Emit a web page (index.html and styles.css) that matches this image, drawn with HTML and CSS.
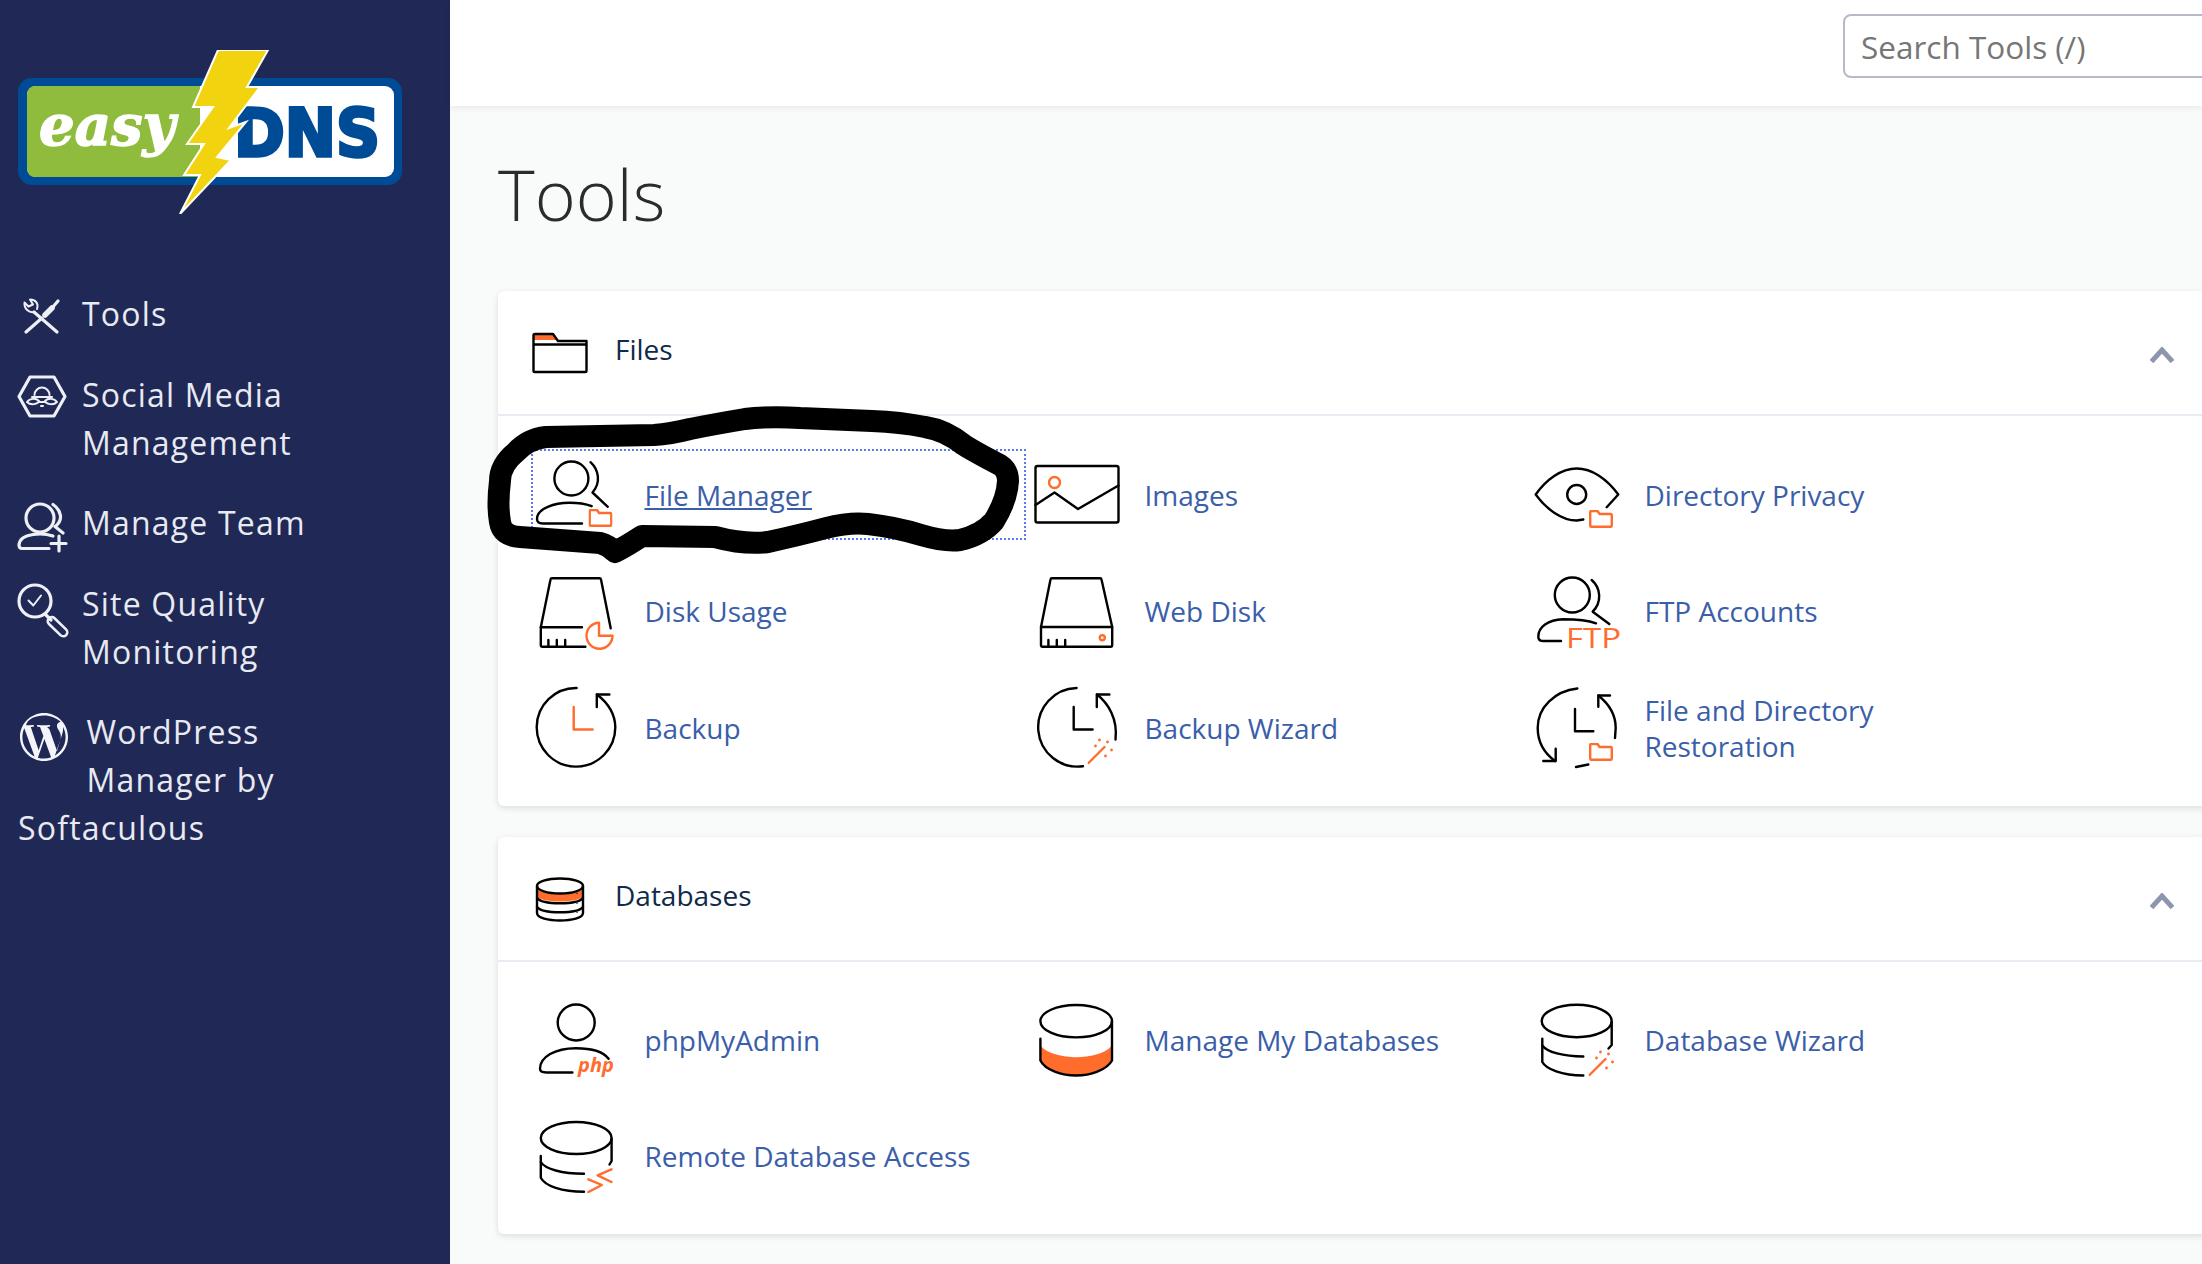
FILE: index.html
```html
<!DOCTYPE html>
<html lang="en">
<head>
<meta charset="utf-8">
<title>Tools</title>
<link rel="stylesheet" href="styles.css">
</head>
<body>
<svg class="defs" width="0" height="0">
  <symbol id="mini-folder" viewBox="0 0 24 18"><path d="M1.2 15.5V2.2Q1.2 1 2.4 1H8.5L10.6 4H21.6Q22.8 4 22.8 5.2V15.5Q22.8 16.8 21.6 16.8H2.4Q1.2 16.8 1.2 15.5Z"/></symbol>
  <symbol id="wand" viewBox="0 0 28 28"><path d="M1 26 L17 10"/><circle class="dot" cx="12" cy="3" r="1.4"/><circle class="dot" cx="20" cy="5" r="1.4"/><circle class="dot" cx="24" cy="13" r="1.4"/><circle class="dot" cx="18" cy="19" r="1.4"/><circle class="dot" cx="8" cy="9" r="1.4"/></symbol>
</svg>
<aside class="sidebar">
  <svg class="logo" viewBox="18 50 384 164" width="384" height="164" role="img" aria-label="easyDNS">
    <rect x="18" y="78" width="384" height="107" rx="14" fill="#004b96"/>
    <rect x="27" y="86" width="367" height="91" rx="9" fill="#fff"/>
    <path d="M36 86H200V177H36Q27 177 27 168V95Q27 86 36 86Z" fill="#8fbc3d"/>
    <text class="logo-easy" x="39" y="145" textLength="136" lengthAdjust="spacingAndGlyphs">easy</text>
    <text class="logo-dns" x="234" y="156" textLength="146" lengthAdjust="spacingAndGlyphs">DNS</text>
    <path d="M218 50H268L247 87 260 87 229 128 246 122 217 157 231 160 180 214 200 175 184 175 204 144 187 144 213 107 193 107Z" fill="#f2d30f" stroke="#fff" stroke-width="2"/>
  </svg>
  <nav class="nav">
    <a class="nav-item">
      <svg class="nav-icon" viewBox="0 0 48 48"><path d="M8 42 24 28"/><path class="thick" d="M27 25 34 18"/><path d="M34 18 40 11"/><path d="M39 42 16 22"/><path class="fine" d="M16 22C11 23 6 19 6.500 12.500L10.500 16.500 15 14.500 12 9.500C17 9.500 21 13 19 19"/></svg>
      <span>Tools</span>
    </a>
    <a class="nav-item">
      <svg class="nav-icon" viewBox="0 0 48 48"><path d="M1 25.500 12 6H36L47 25.500 36 45H12Z"/><g class="fine"><path d="M16.500 24A7.500 7.500 0 0 1 31.500 24"/><path d="M14 26H34"/><path d="M9 31C12 27 18 27 21 30 20 33 13 35 9 31Z"/><path d="M39 31C36 27 30 27 27 30 28 33 35 35 39 31Z"/><path d="M21.500 31H26.500M23 35H25"/></g></svg>
      <span>Social Media<br>Management</span>
    </a>
    <a class="nav-item">
      <svg class="nav-icon" viewBox="0 0 48 48"><circle cx="22" cy="19" r="14"/><path d="M35 5.500C43 11 46 21 37 27.600L45 34"/><path d="M35 37C26 34 2 33 1 46 1 48 2 49.500 4 49.500H31"/><path d="M33 44.500H48M41 37V52"/></svg>
      <span>Manage Team</span>
    </a>
    <a class="nav-item">
      <svg class="nav-icon" viewBox="0 0 48 48"><circle cx="17" cy="21" r="16"/><path class="fine" d="M10.500 20.500 15.300 25.500 23 15.500"/><path d="M27.500 34.500 33 40"/><rect class="handle" x="27.500" y="42.700" width="24" height="8" rx="4" transform="rotate(44 39.500 46.700)"/></svg>
      <span>Site Quality<br>Monitoring</span>
    </a>
    <a class="nav-item nav-item-wrap">
      <svg class="wp-icon" viewBox="2 2 20 20"><path d="M12 2C6.486 2 2 6.486 2 12s4.486 10 10 10 10-4.486 10-10S17.514 2 12 2zM3.009 12c0-1.303.28-2.54.78-3.658l4.286 11.742C5.077 18.628 3.009 15.555 3.009 12zm8.991 8.991c-.883 0-1.734-.13-2.54-.366l2.697-7.836 2.763 7.57c.018.045.04.085.064.123-.934.33-1.939.509-2.984.509zm1.239-13.206c.541-.028 1.028-.085 1.028-.085.484-.057.427-.769-.057-.741 0 0-1.456.114-2.396.114-.883 0-2.367-.114-2.367-.114-.484-.028-.541.712-.057.741 0 0 .459.057.943.085l1.4 3.837-1.967 5.9-3.273-9.737c.541-.028 1.028-.085 1.028-.085.484-.057.427-.769-.057-.741 0 0-1.456.114-2.396.114-.169 0-.368-.004-.579-.011C5.154 4.455 8.366 3.009 12 3.009c2.708 0 5.173 1.036 7.023 2.731-.045-.003-.089-.008-.135-.008-.883 0-1.51.769-1.51 1.595 0 .741.427 1.367.883 2.108.342.598.741 1.367.741 2.478 0 .769-.296 1.661-.683 2.904l-.896 2.993-3.184-9.025zm3.28 11.98l2.746-7.94c.513-1.283.684-2.308.684-3.22 0-.331-.022-.638-.061-.925.703 1.282 1.103 2.754 1.103 4.32 0 3.322-1.8 6.222-4.472 7.765z"/></svg>
      WordPress Manager by Softaculous
    </a>
  </nav>
</aside>
<main class="main">
  <header class="topbar">
    <input class="search" type="text" placeholder="Search Tools (/)" aria-label="Search Tools">
  </header>
  <div class="content">
    <h1 class="title">Tools</h1>

    <section class="panel">
      <div class="panel-head">
        <svg class="head-icon" viewBox="0 0 56 40"><path d="M1.500 7V2.500Q1.500 1 3 1H21L26 7Z" fill="#ff6c2c"/><path class="ln" d="M1.500 38V2.500Q1.500 1 3 1H21L26 8H54.500V38Q54.500 39 53.500 39H2.500Q1.500 39 1.500 38Z M1.500 11.500H54.500"/></svg>
        <h2>Files</h2>
        <svg class="chev" viewBox="0 0 24 16"><path d="M1.500 14.500 12 3 22.500 14.500"/></svg>
      </div>
      <div class="grid">
        <a class="item item-focus">
          <svg class="ico" viewBox="0 0 80 80"><g class="ln"><circle cx="36.400" cy="22.500" r="17"/><path d="M55.500 6.200C64 14 66 27 57.500 36.500L72.800 50.800"/><path d="M56.700 50.200C48 47 40 46.800 34.500 46.800 20 46.800 2 52 2 63 2 66 4 67.500 7.700 67.500H47"/></g><use class="or" href="#mini-folder" x="53.500" y="53" width="24" height="18"/></svg>
          <span class="lbl">File Manager</span>
        </a>
        <a class="item">
          <svg class="ico" viewBox="0 0 80 80"><g class="ln"><rect x="0.500" y="10" width="83" height="56.500" rx="2"/><path d="M0.500 49 19.500 36.500 43 53 83.500 29.500"/></g><circle class="or" cx="19.500" cy="26.500" r="5.500"/></svg>
          <span class="lbl">Images</span>
        </a>
        <a class="item">
          <svg class="ico" viewBox="0 0 80 80"><g class="ln"><path d="M71.700 51.200 83.300 38.500C72 23 57 12.500 41.700 12.500 26 12.500 11 24 0.700 38.500 11 53 27 64.500 41.700 64.500L48.300 63.500"/><circle cx="41.700" cy="38.500" r="9.500"/></g><use class="or" href="#mini-folder" x="54" y="54" width="24" height="18"/></svg>
          <span class="lbl">Directory Privacy</span>
        </a>

        <a class="item">
          <svg class="ico" viewBox="0 0 80 80"><g class="ln"><path d="M5.800 54.300 15.500 6.500Q15.700 5.300 17 5.300H64.500Q65.800 5.300 66 6.500L75.700 55.300"/><path d="M47 54.300H5.800V72.500Q5.800 73.700 7 73.700H50.400"/><path d="M13.400 67V73.700M21.800 67V73.700M30.200 67V73.700"/></g><path class="or" d="M64 49.700A13 13 0 1 0 77.500 62.700H64Z"/></svg>
          <span class="lbl">Disk Usage</span>
        </a>
        <a class="item">
          <svg class="ico" viewBox="0 0 80 80"><g class="ln"><path d="M6 54 15.500 6.500Q15.700 5.300 17 5.300H65Q66.300 5.300 66.500 6.500L77.200 54V72.500Q77.200 73.700 76 73.700H7.200Q6 73.700 6 72.500Z"/><path d="M6 54H77.200"/><path d="M13.400 67V73.700M21.800 67V73.700M30.200 67V73.700"/></g><circle class="or" cx="67.300" cy="64.700" r="2.500"/></svg>
          <span class="lbl">Web Disk</span>
        </a>
        <a class="item">
          <svg class="ico" viewBox="0 0 80 80"><g class="ln"><circle cx="37.300" cy="22" r="17.500"/><path d="M56.700 7C66 15 67 29 57.700 38.700L74.300 51"/><path d="M61 50.300C52 47 40 46.300 28 46.300 13 46.800 3.300 54 3.300 63.700 3.300 66 5 68 8.300 68H26"/></g><text class="ftp" x="31" y="75.300" textLength="55" lengthAdjust="spacingAndGlyphs">FTP</text></svg>
          <span class="lbl">FTP Accounts</span>
        </a>

        <a class="item">
          <svg class="ico" viewBox="0 0 80 80"><g class="ln"><path d="M41.600 -1A39.300 39.300 0 1 0 80.300 38C80 24 73 14 62 5.500"/><path d="M74.400 5.500H61.800V18"/></g><path class="or" d="M38.700 18V40.500H57.600"/></svg>
          <span class="lbl">Backup</span>
        </a>
        <a class="item">
          <svg class="ico" viewBox="0 0 80 80"><g class="ln"><path d="M41.600 -1A39.300 39.300 0 1 0 48 77.200"/><path d="M80.500 50.500C83 30 73 14 62 5.500"/><path d="M74.400 5.500H61.800V18"/><path d="M38.700 18V40.500H57.600"/></g><use class="or" href="#wand" x="52.500" y="48" width="28" height="28"/></svg>
          <span class="lbl">Backup Wizard</span>
        </a>
        <a class="item">
          <svg class="ico" viewBox="0 0 80 80"><g class="ln"><path d="M42.300 -0.500C20 2 2.700 18 2.700 38.800 2.700 52 9 64 20 72"/><path d="M8.300 72H20.700V59.800"/><path d="M63.300 6.500C74 15 80.700 26 80.700 38.800L80 49"/><path d="M75 6.500H63.300V17.800"/><path d="M40 20V42.200H58.300"/><path d="M41 78 53.300 75.500"/></g><use class="or" href="#mini-folder" x="54" y="54" width="24" height="18"/></svg>
          <span class="lbl lbl-wrap">File and Directory Restoration</span>
        </a>
      </div>
    </section>

    <section class="panel panel-next">
      <div class="panel-head">
        <svg class="head-icon" viewBox="0 0 56 44"><path d="M5 12C12 18 44 18 51 12V20C44 26 12 26 5 20Z" fill="#ff6c2c"/><g class="ln"><ellipse cx="28" cy="9" rx="23" ry="7.500"/><path d="M5 9V36C5 46 51 46 51 36V9"/><path d="M5 21C10 28 46 28 51 21M5 30C10 37 46 37 51 30"/></g><path class="dots" d="M45 16.500V17M45 26V26.500M45 35V35.500"/></svg>
        <h2>Databases</h2>
        <svg class="chev" viewBox="0 0 24 16"><path d="M1.500 14.500 12 3 22.500 14.500"/></svg>
      </div>
      <div class="grid grid-tight">
        <a class="item">
          <svg class="ico" viewBox="0 0 80 80"><g class="ln"><ellipse cx="41.200" cy="21.500" rx="18.500" ry="18"/><path d="M73.600 57.800C68 50 56 47.200 40.800 47.200 20 47.200 5 56 5 67.800 5 70 7 71.500 11.300 71.500H37.400"/></g><text class="php" x="43" y="71">php</text></svg>
          <span class="lbl">phpMyAdmin</span>
        </a>
        <a class="item">
          <svg class="ico" viewBox="0 0 80 80"><path d="M5.400 44.500C12 53 30 56.200 41.200 56.200 54 56.200 70 53 77 44.500V60C72 70 55 74.500 41.200 74.500 27 74.500 10 70 5.400 60Z" fill="#ff6c2c"/><g class="ln"><ellipse cx="41.200" cy="20.200" rx="35.800" ry="16.200"/><path d="M5.400 37.800V59.500C10 69 27 74.500 41.200 74.500 55 74.500 72 69 77 59.500V20.200"/></g></svg>
          <span class="lbl">Manage My Databases</span>
        </a>
        <a class="item">
          <svg class="ico" viewBox="0 0 80 80"><g class="ln"><ellipse cx="41.700" cy="20" rx="35" ry="16.200"/><path d="M76.700 21V44L73.500 47.500"/><path d="M7.300 37.800V61C11 68 27 74.500 48.300 74.500"/><path d="M7.300 44.500C12 51 28 55.500 48.300 55.500"/></g><use class="or" href="#wand" x="53.500" y="48" width="28" height="28"/></svg>
          <span class="lbl">Database Wizard</span>
        </a>

        <a class="item">
          <svg class="ico" viewBox="0 0 80 80"><g class="ln"><ellipse cx="41.200" cy="20" rx="35.400" ry="16"/><path d="M76.600 21V43L74.500 46.500"/><path d="M5.800 38V59.700C10 68 27 73.700 49 73.700"/><path d="M5.800 44C10 51 27 55.700 49 55.700"/></g><path class="or" d="M53.400 61.300 66.900 67 53.400 74M76.500 51.300 62.600 57.300 76.500 64"/></svg>
          <span class="lbl">Remote Database Access</span>
        </a>
      </div>
    </section>
  </div>
</main>
<svg class="scribble" viewBox="0 0 2202 1264" width="2202" height="1264" aria-hidden="true"><path d="M500 481Q497 505 500 522 502 536 520 537L600 543Q608 545 615 552 625 547 642 536L715 537Q745 545 768 542 800 535 826 528 850 522 868 524 895 527 921 535 945 542 960 540 982 535 994 521 1007 500 1008 481 1008 470 1000 465 975 452 964 445 945 430 925 427 900 422 872 421L800 418Q770 416 745 419 715 424 690 429 670 434 654 435L546 437Q528 439 516 452 500 465 500 481Z"/></svg>
</body>
</html>
```

FILE: styles.css
```css
* { box-sizing: border-box; }
html, body { margin: 0; height: 100%; }
body {
  display: flex;
  width: 2202px;
  height: 1264px;
  overflow: hidden;
  font-family: "Open Sans", "Noto Sans", sans-serif;
  background: #f9fafa;
  position: relative;
}
.defs { position: absolute; }

/* sidebar */
.sidebar {
  flex: 0 0 450px;
  background: #202856;
  padding: 50px 0 0 18px;
  color: #e8eaf2;
}
.logo { display: block; margin-bottom: 76px; }
.logo-easy { font: italic 700 56px "DejaVu Serif", serif; fill: #fff; stroke: #fff; stroke-width: 1.5; }
.logo-dns { font: 700 66px "DejaVu Sans", sans-serif; fill: #004b96; stroke: #004b96; stroke-width: 3.5; }
.nav { display: flex; flex-direction: column; gap: 32.5px; }
.nav-item {
  display: flex;
  gap: 16px;
  font-size: 32px;
  line-height: 48px;
  letter-spacing: 1.2px;
}
.nav-item-wrap { display: block; width: 320px; }
.nav-icon {
  flex: 0 0 48px;
  width: 48px;
  height: 48px;
  overflow: visible;
  fill: none;
  stroke: #eef0f6;
  stroke-width: 3.2;
  stroke-linecap: round;
  stroke-linejoin: round;
}
.nav-icon .thick { stroke-width: 5.5; }
.nav-icon .fine { stroke-width: 2; }
.nav-icon .handle { stroke-width: 2.6; }
.wp-icon {
  float: left;
  width: 48px;
  height: 48px;
  margin: 5px 18.500px 0 2px;
  fill: #f4f5fa;
}

/* main */
.main { flex: 1; min-width: 0; }
.topbar {
  height: 106px;
  background: #fff;
  padding: 14px 0 0 1393px;
  box-shadow: 0 2px 6px rgba(0, 0, 0, .07);
  position: relative;
}
.search {
  display: block;
  width: 420px;
  height: 64px;
  border: 2px solid #b6b9ca;
  border-radius: 8px;
  padding: 0 16px;
  font: 400 31.5px "Open Sans", sans-serif;
  background: #fff;
}
.search::placeholder { color: #767676; opacity: 1; }
.content { padding: 0 0 0 48px; margin-right: -6px; }
.title {
  margin: 0;
  padding: 55px 0 64px;
  font-size: 70px;
  line-height: 66px;
  font-weight: 300;
  color: #2b2b2b;
}
.panel {
  background: #fff;
  border-radius: 6px;
  box-shadow: 0 2px 6px rgba(0, 0, 0, .12);
}
.panel-next { margin-top: 31px; }
.panel-head {
  height: 125px;
  display: flex;
  align-items: center;
  padding: 0 34px;
  border-bottom: 2px solid #e8ecf3;
}
.panel-head h2 {
  margin: 0 0 7px 27px;
  flex: 1;
  font-size: 28px;
  font-weight: 400;
  color: #0f2a4a;
}
.head-icon { width: 56px; flex: 0 0 56px; overflow: visible; }
.chev {
  width: 24px;
  height: 16px;
  margin-top: 5px;
  fill: none;
  stroke: #8d96ae;
  stroke-width: 5;
}
.grid {
  display: grid;
  grid-template-columns: repeat(3, 495px);
  column-gap: 5px;
  row-gap: 25.5px;
  padding: 33px 0 33px 33px;
}
.grid-tight { padding: 32px 0 32px 33px; }
.item {
  height: 91px;
  display: flex;
  align-items: center;
  gap: 30px;
  padding-left: 3.5px;
  color: #3a5ea9;
  font-size: 28px;
  line-height: 36px;
}
.item-focus { outline: 2px dotted #5a7ae8; outline-offset: -2px; text-decoration: underline; }
.ico { flex: 0 0 80px; width: 80px; height: 80px; margin-top: 3px; overflow: visible; }
.lbl-wrap { width: 300px; }
.ln {
  fill: none;
  stroke: #000;
  stroke-width: 2.4;
  stroke-linecap: round;
  stroke-linejoin: round;
}
.or {
  fill: none;
  stroke: #ff6c2c;
  stroke-width: 2.4;
  stroke-linecap: round;
  stroke-linejoin: round;
}
.dot { fill: #ff6c2c; stroke: none; }
.dots { fill: none; stroke: #000; stroke-width: 2; }
.ftp { font: 400 28px "Open Sans", sans-serif; fill: #ff6c2c; }
.php { font: italic 700 20px "Open Sans", sans-serif; fill: #ff6c2c; }

/* marker scribble drawn over the screenshot */
.scribble {
  position: absolute;
  top: 0;
  left: 0;
  pointer-events: none;
  fill: none;
  stroke: #000;
  stroke-width: 22;
  stroke-linejoin: round;
}
```
